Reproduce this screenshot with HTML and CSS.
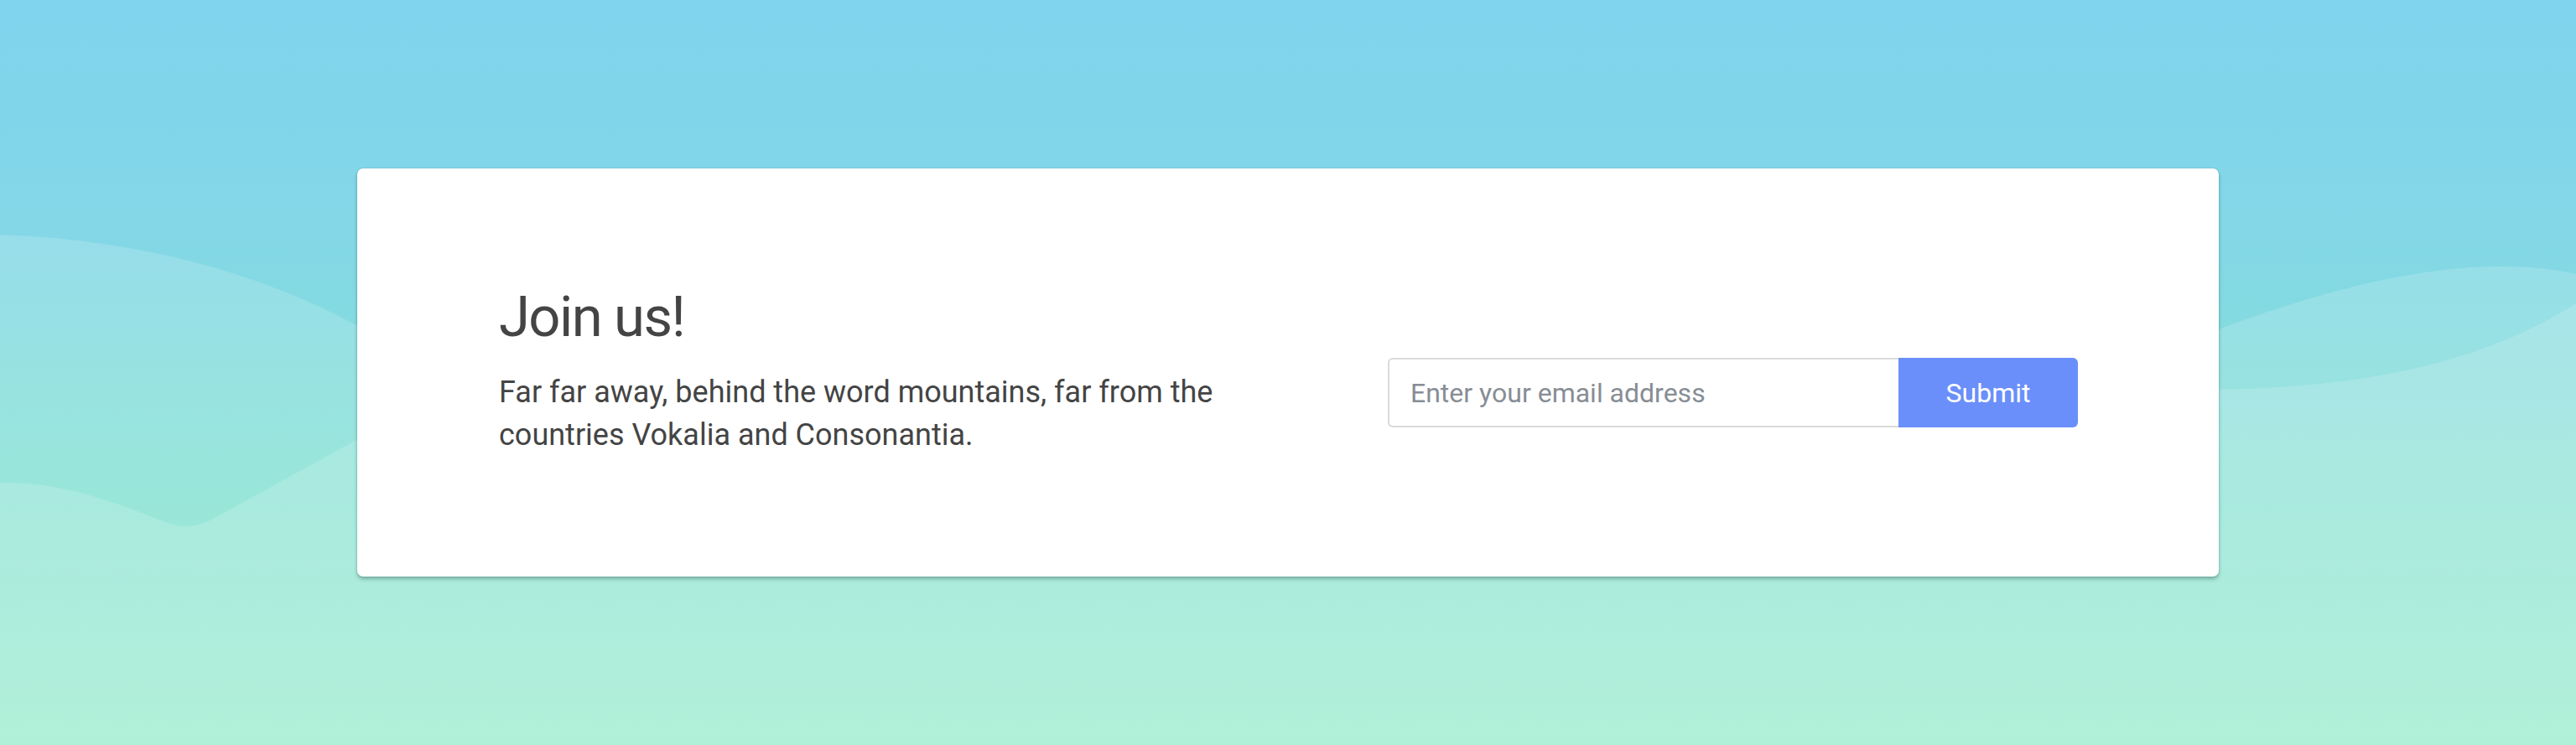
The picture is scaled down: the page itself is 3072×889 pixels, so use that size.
FILE: index.html
```html
<!DOCTYPE html>
<html lang="en">
<head>
<meta charset="utf-8">
<title>Join us</title>
<link rel="stylesheet" href="styles.css">
</head>
<body>
<div class="page">
  <svg class="waves" viewBox="0 0 3072 889" preserveAspectRatio="none" aria-hidden="true">
    <path class="wave" d="M0 280 C150 285 300 320 425 388 L1500 560 L2646 393 C2760 350 2880 318 2980 318 C3020 318 3050 322 3072 327 L3072 889 L0 889 Z"/>
    <path class="wave" d="M0 576 C80 574 150 605 200 624 C215 630 232 630 252 620 L425 525 L2646 465 C2800 462 2950 440 3072 362 L3072 889 L0 889 Z"/>
  </svg>
  <section class="card">
    <div class="intro">
      <h1 class="title">Join us!</h1>
      <p class="lead">Far far away, behind the word mountains, far from the countries Vokalia and Consonantia.</p>
    </div>
    <form class="signup">
      <input class="email" type="email" placeholder="Enter your email address">
      <button class="submit" type="button">Submit</button>
    </form>
  </section>
</div>
</body>
</html>
```
FILE: styles.css
```css
html, body {
  margin: 0;
  padding: 0;
}
body {
  font-family: Roboto, "Liberation Sans", sans-serif;
  color: #444444;
}
.page {
  position: relative;
  min-height: 889px;
  height: 100vh;
  display: flex;
  align-items: center;
  justify-content: center;
  overflow: hidden;
  background: linear-gradient(to bottom, #80d4ee 0%, #83d7e6 32%, #86e2d2 68%, #92eac9 100%);
}
.waves {
  position: absolute;
  left: 0;
  top: 0;
  width: 100%;
  height: 100%;
}
.wave {
  fill: #ffffff;
  fill-opacity: 0.16;
}
.card {
  position: relative;
  box-sizing: border-box;
  width: 2220px;
  height: 487px;
  background: #ffffff;
  border-radius: 7px;
  box-shadow: 0 3px 4px rgba(20, 70, 60, 0.35), 0 0 2px rgba(20, 70, 60, 0.2);
  padding: 137px 168px 0 169px;
  display: flex;
  justify-content: space-between;
  align-items: flex-start;
}
.intro {
  width: 920px;
}
.title {
  margin: 0 0 25px;
  font-size: 67px;
  font-weight: 400;
  line-height: 1.2;
  letter-spacing: -1.6px;
  color: #444444;
}
.lead {
  margin: 0;
  font-size: 36px;
  line-height: 51px;
  font-weight: 400;
}
.signup {
  display: flex;
  margin-top: 89px;
}
.email {
  box-sizing: border-box;
  width: 609px;
  height: 83px;
  border: 2px solid #dadada;
  border-right: none;
  border-radius: 6px 0 0 6px;
  padding: 0 25px;
  font-family: Roboto, "Liberation Sans", sans-serif;
  font-size: 32px;
  color: #444444;
  outline: none;
  background: #ffffff;
}
.email::placeholder {
  color: #878d95;
}
.submit {
  box-sizing: border-box;
  width: 214px;
  height: 83px;
  border: none;
  border-radius: 0 6px 6px 0;
  background: #6a8ffa;
  color: #ffffff;
  font-family: Roboto, "Liberation Sans", sans-serif;
  font-size: 32px;
  font-weight: 400;
  padding: 0;
  cursor: pointer;
}
```
